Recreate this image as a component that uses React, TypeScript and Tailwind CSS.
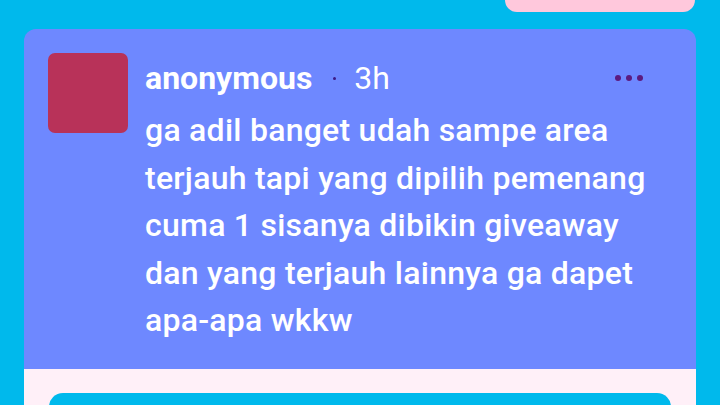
export default function App() {
  return (
    <div className="w-[720px] h-[405px] overflow-hidden bg-[#00b9ec] font-['Roboto',sans-serif]">
      <div className="flex justify-end pr-[25px]">
        <div className="w-[190px] h-[12px] rounded-b-[12px] bg-[#ffc8dc]" />
      </div>
      <div className="mx-[24px] mt-[17px] rounded-t-[12px] bg-[#6e88ff] h-[340px] flex gap-[17px] pl-[24px] pt-[24px] pr-[30px]">
        <div className="w-[80px] h-[80px] rounded-[7px] bg-[#b83259] shrink-0" />
        <div className="flex-1 text-white">
          <div className="flex items-center h-[50px] pr-[23px]">
            <span className="text-[32px] font-bold leading-none">anonymous</span>
            <span className="w-[3px] h-[3px] rounded-full bg-[#3b1a86] ml-[21px] mr-[18px]" />
            <span className="text-[32px] leading-none">3h</span>
            <div className="ml-auto flex gap-[5px] items-center">
              <span className="w-[6px] h-[6px] rounded-full bg-[#5c1a7f]" />
              <span className="w-[6px] h-[6px] rounded-full bg-[#5c1a7f]" />
              <span className="w-[6px] h-[6px] rounded-full bg-[#5c1a7f]" />
            </div>
          </div>
          <p className="mt-[4px] text-[32px] font-medium leading-[47.5px] tracking-[0.25px]">
            ga adil banget udah sampe area terjauh tapi yang dipilih pemenang cuma 1 sisanya dibikin giveaway dan yang terjauh lainnya ga dapet apa-apa wkkw
          </p>
        </div>
      </div>
      <div className="mx-[24px] bg-[#fff0f8] pt-[24px] px-[25px]">
        <div className="h-[40px] rounded-t-[14px] bg-[#00b9ec]" />
      </div>
    </div>
  );
}
